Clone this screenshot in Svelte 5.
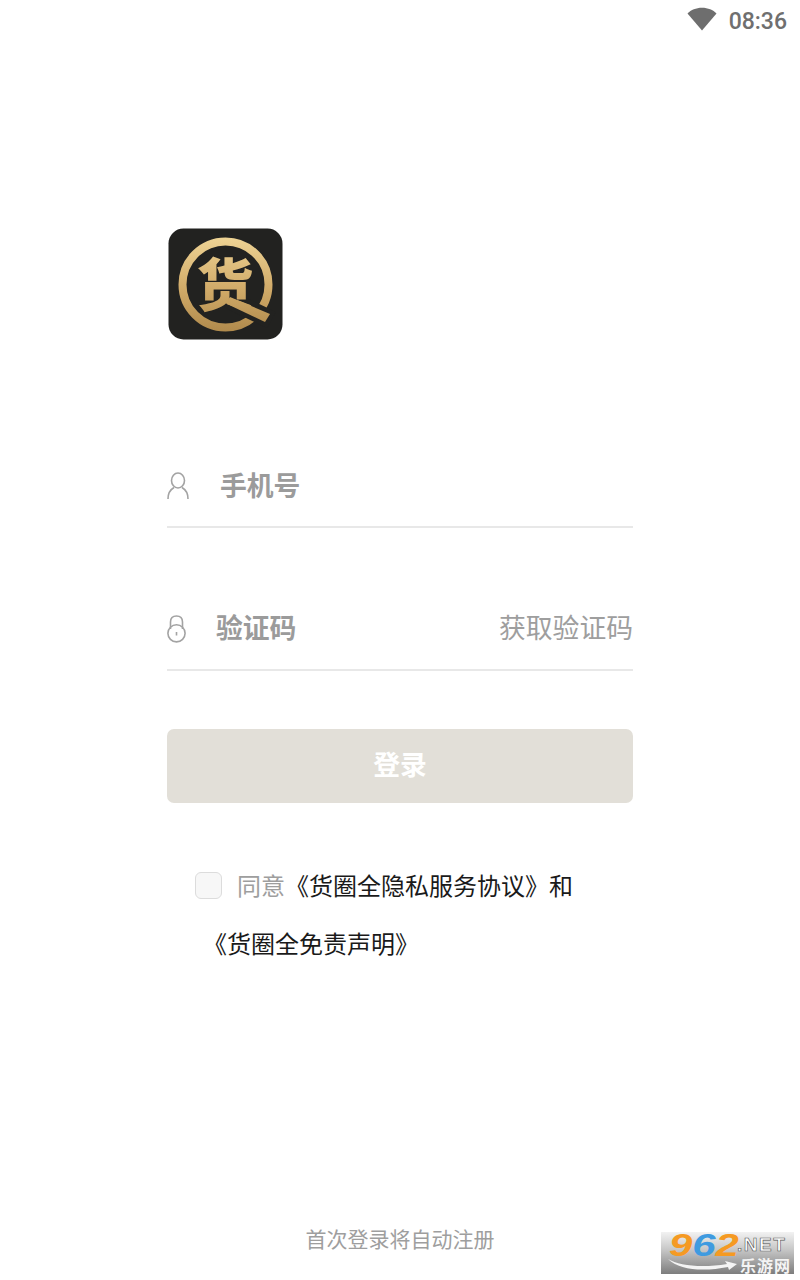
<script>
  const agreement = '《货圈全隐私服务协议》和';
</script>

<div class="page">
  <header class="status">
    <svg class="wifi" width="30" height="24" viewBox="0 0 30 24" aria-hidden="true">
      <path d="M0.5 6.5 C4 3 9 0.8 15 0.8 C21 0.8 26 3 29.5 6.5 L15 23.5 Z" fill="#6e6e6e" />
    </svg>
    <span class="time">08:36</span>
  </header>

  <main class="form">
    <div class="logo">
      <svg width="115" height="112" viewBox="0 0 115 112" role="img" aria-label="货圈全">
        <defs>
          <linearGradient id="gold" gradientUnits="userSpaceOnUse" x1="0" y1="10" x2="0" y2="104">
            <stop offset="0" stop-color="#eed394" />
            <stop offset="0.55" stop-color="#d0aa68" />
            <stop offset="1" stop-color="#b08a4c" />
          </linearGradient>
        </defs>
        <rect x="0.5" y="0.5" width="114" height="111" rx="15" fill="#222220" />
        <circle cx="57.5" cy="56.5" r="43" fill="none" stroke="url(#gold)" stroke-width="8" />
        <path d="M64 63 L108 84 L99 100 L55 79 Z" fill="#222220" />
        <text x="57" y="78" class="glyph" fill="url(#gold)">货</text>
        <path d="M62 69 L102 86 L97 94 L57 75 Z" fill="url(#gold)" />
      </svg>
    </div>

    <label class="field first">
      <svg class="user" width="22" height="28" viewBox="0 0 22 28" aria-hidden="true">
        <ellipse cx="11" cy="8.5" rx="6.5" ry="7.5" fill="none" stroke="#a3a3a3" stroke-width="1.6" />
        <path d="M1 27 C1 21 3.5 17.5 7 15.5 M21 27 C21 21 18.5 17.5 15 15.5" fill="none" stroke="#a3a3a3" stroke-width="1.6" />
      </svg>
      <span class="placeholder phone">手机号</span>
    </label>

    <label class="field second">
      <svg class="lock" width="20" height="28" viewBox="0 0 20 28" aria-hidden="true">
        <path d="M3.5 14 V7 C3.5 3 6 1 9.5 1 C13 1 15.5 3 15.5 7 V14" fill="none" stroke="#a3a3a3" stroke-width="1.6" />
        <circle cx="9.5" cy="18.3" r="8.6" fill="none" stroke="#a3a3a3" stroke-width="1.6" />
        <rect x="8.7" y="17" width="1.6" height="3.5" fill="#a3a3a3" />
      </svg>
      <span class="placeholder code">验证码</span>
      <span class="getcode">获取验证码</span>
    </label>

    <button class="login" type="button">登录</button>

    <div class="agree">
      <div class="line">
        <span class="check"></span>
        <span class="muted">同意</span><span class="dark">{agreement}</span>
      </div>
      <div class="line dark second-line">《货圈全免责声明》</div>
    </div>
  </main>

  <footer class="foot">首次登录将自动注册</footer>

  <div class="mark" aria-label="962.NET 乐游网">
    <div class="digits"><span class="n9">9</span><span class="n6">6</span><span class="n2">2</span></div>
    <div class="net">.NET</div>
    <div class="mark-sub">乐游网</div>
    <svg class="swoosh" width="70" height="14" viewBox="0 0 70 14" aria-hidden="true">
      <path d="M1 1 C12 8 36 10 60 6 L58 3 L70 6 L62 12 L61 9 C36 14 12 12 1 1 Z" fill="#f4f4f4" />
    </svg>
  </div>
</div>

<style>
  :global(body) {
    margin: 0;
    background: #fff;
  }
  .page {
    position: relative;
    width: 800px;
    height: 1280px;
    display: flex;
    flex-direction: column;
    overflow: hidden;
    font-family: "Noto Sans CJK SC", "Noto Sans", sans-serif;
  }
  .status {
    height: 40px;
    display: flex;
    justify-content: flex-end;
    align-items: center;
    gap: 12px;
    padding-right: 13px;
  }
  .wifi {
    position: relative;
    top: -1px;
  }
  .time {
    font-family: Roboto, sans-serif;
    font-size: 23px;
    font-weight: 500;
    color: #6f6f6f;
    position: relative;
    top: 1px;
  }
  .form {
    margin: 188px 167px 0;
    display: flex;
    flex-direction: column;
  }
  .logo {
    height: 112px;
    margin-left: 1px;
    line-height: 0;
  }
  .glyph {
    font-family: "Noto Sans CJK SC", sans-serif;
    font-weight: 900;
    font-size: 57px;
    text-anchor: middle;
  }
  .field {
    display: flex;
    align-items: center;
    height: 59px;
    padding-bottom: 11px;
    border-bottom: 2px solid #e8e8e8;
  }
  .first {
    margin-top: 116px;
  }
  .second {
    margin-top: 71px;
  }
  .user,
  .lock {
    flex: none;
  }
  .placeholder {
    font-size: 26.8px;
    font-weight: 700;
    color: #9b9b9b;
    line-height: 40px;
  }
  .phone {
    margin-left: 31px;
    margin-bottom: 2px;
  }
  .code {
    margin-left: 29px;
    margin-bottom: 4px;
  }
  .getcode {
    margin-left: auto;
    margin-bottom: 3px;
    font-size: 26.8px;
    font-weight: 400;
    color: #9e9e9e;
    line-height: 40px;
  }
  .login {
    margin-top: 58px;
    height: 74px;
    border: 0;
    border-radius: 7px;
    background: #e2dfd8;
    color: #fff;
    font-family: inherit;
    font-size: 26.8px;
    font-weight: 700;
    padding: 0 0 6px;
  }
  .agree {
    margin-top: 52px;
    margin-left: 28px;
    font-size: 24px;
  }
  .line {
    display: flex;
    align-items: center;
    height: 58px;
  }
  .second-line {
    margin-left: 8px;
  }
  .check {
    flex: none;
    box-sizing: border-box;
    width: 27px;
    height: 27px;
    border: 1px solid #dcdcdc;
    border-radius: 6px;
    background: #f7f7f7;
    margin-right: 15px;
    position: relative;
    top: 1px;
  }
  .muted {
    color: #9e9e9e;
  }
  .dark {
    color: #1a1a1a;
  }
  .foot {
    margin-top: auto;
    height: 59px;
    text-align: center;
    font-size: 21px;
    line-height: 34px;
    color: #9e9e9e;
  }
  .mark {
    position: absolute;
    left: 661px;
    top: 1232px;
    width: 133px;
    height: 42px;
    background: linear-gradient(#f2f2f2 0%, #c9c9c9 40%, #7d7d7d 100%);
  }
  .digits {
    position: absolute;
    left: 8px;
    top: -4px;
    font-family: "Liberation Sans", sans-serif;
    font-weight: 700;
    font-style: italic;
    font-size: 31px;
    line-height: 36px;
    transform: scaleX(1.35);
    transform-origin: left top;
    display: flex;
  }
  .n9,
  .n2 {
    color: #f59a23;
  }
  .n6 {
    color: #3f9be0;
  }
  .net {
    position: absolute;
    left: 76px;
    top: 2px;
    font-family: "Liberation Sans", sans-serif;
    font-weight: 700;
    font-size: 19px;
    line-height: 22px;
    letter-spacing: 1.5px;
    color: #fff;
    -webkit-text-stroke: 0.6px #555;
  }
  .mark-sub {
    position: absolute;
    left: 79px;
    top: 24px;
    font-size: 16px;
    line-height: 18px;
    font-weight: 700;
    color: #f4f4f4;
    letter-spacing: 1px;
  }
  .swoosh {
    position: absolute;
    left: 6px;
    top: 26px;
  }
</style>
